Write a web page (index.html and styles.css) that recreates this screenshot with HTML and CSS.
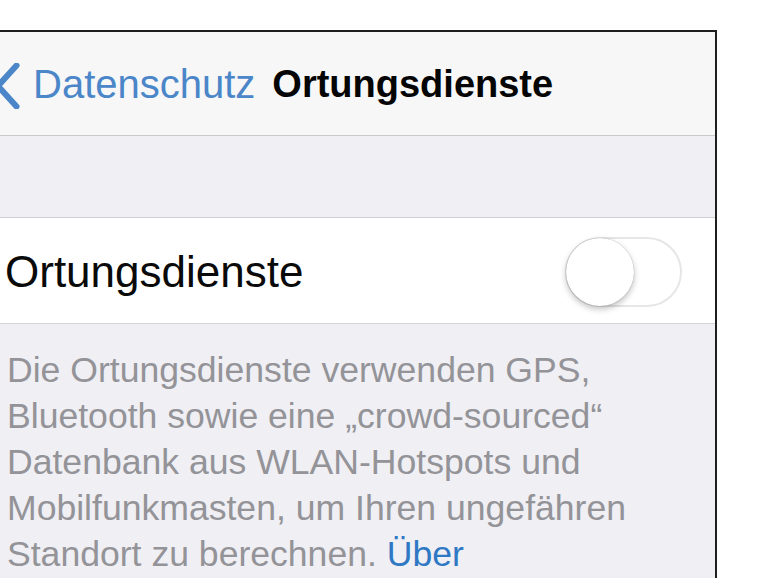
FILE: index.html
```html
<!DOCTYPE html>
<html lang="de">
<head>
<meta charset="utf-8">
<title>Ortungsdienste</title>
<link rel="stylesheet" href="styles.css">
</head>
<body>
<div class="frame">
  <header class="nav">
    <svg class="chevron" viewBox="0 0 20 46" width="20" height="46" aria-hidden="true">
      <path d="M16.5 2.5 L-2 23 L16.5 43.5" fill="none" stroke="#4a86c8" stroke-width="6" stroke-linecap="round" stroke-linejoin="round"/>
    </svg>
    <span class="back">Datenschutz</span>
    <span class="title">Ortungsdienste</span>
  </header>
  <div class="gap"></div>
  <div class="row">
    <span class="row-label">Ortungsdienste</span>
    <span class="switch"><span class="knob"></span></span>
  </div>
  <p class="footer">Die Ortungsdienste verwenden GPS, Bluetooth sowie eine „crowd-sourced“ Datenbank aus WLAN-Hotspots und Mobilfunkmasten, um Ihren ungefähren Standort zu berechnen. <span class="link">Über</span></p>
</div>
</body>
</html>
```
FILE: styles.css
```css
html, body {
  margin: 0;
  padding: 0;
  background: #ffffff;
  height: 100%;
  overflow: hidden;
}
body {
  font-family: "Liberation Sans", Arial, sans-serif;
}
.frame {
  margin-top: 30px;
  width: 715px;
  height: 546px;
  border-top: 2px solid #1e1e1e;
  border-right: 2px solid #1e1e1e;
  background: #efeff4;
  overflow: hidden;
}
.nav {
  height: 104px;
  background: #f7f7f8;
  border-bottom: 1px solid #c9c9ce;
  display: flex;
  align-items: center;
  padding-top: 2px;
  box-sizing: border-box;
}
.chevron {
  flex: none;
  margin-right: 13px;
  margin-top: 2px;
}
.back {
  font-size: 40px;
  color: #4a86c8;
  margin-right: 17px;
}
.title {
  font-size: 38px;
  font-weight: bold;
  color: #050505;
}
.gap {
  height: 82px;
  border-bottom: 1px solid #cfcfd3;
  background: #efeff4;
  box-sizing: border-box;
}
.row {
  height: 106px;
  background: #ffffff;
  border-bottom: 1px solid #d4d4d8;
  display: flex;
  align-items: center;
  justify-content: space-between;
  padding: 2px 33px 0 5px;
  box-sizing: border-box;
}
.row-label {
  font-size: 44px;
  color: #0a0a0a;
}
.switch {
  position: relative;
  width: 117px;
  height: 70px;
  border-radius: 35px;
  border: 2px solid #e6e6e9;
  box-sizing: border-box;
  background: #ffffff;
}
.knob {
  position: absolute;
  left: -1px;
  top: -1px;
  width: 68px;
  height: 68px;
  border-radius: 50%;
  background: #ffffff;
  box-shadow: 0 3px 6px rgba(0,0,0,0.25), 0 0 1px rgba(0,0,0,0.35);
}
.footer {
  margin: 0;
  padding: 23px 80px 0 7px;
  font-size: 35.6px;
  line-height: 46px;
  color: #939398;
}
.link {
  color: #2f78c4;
}
```
